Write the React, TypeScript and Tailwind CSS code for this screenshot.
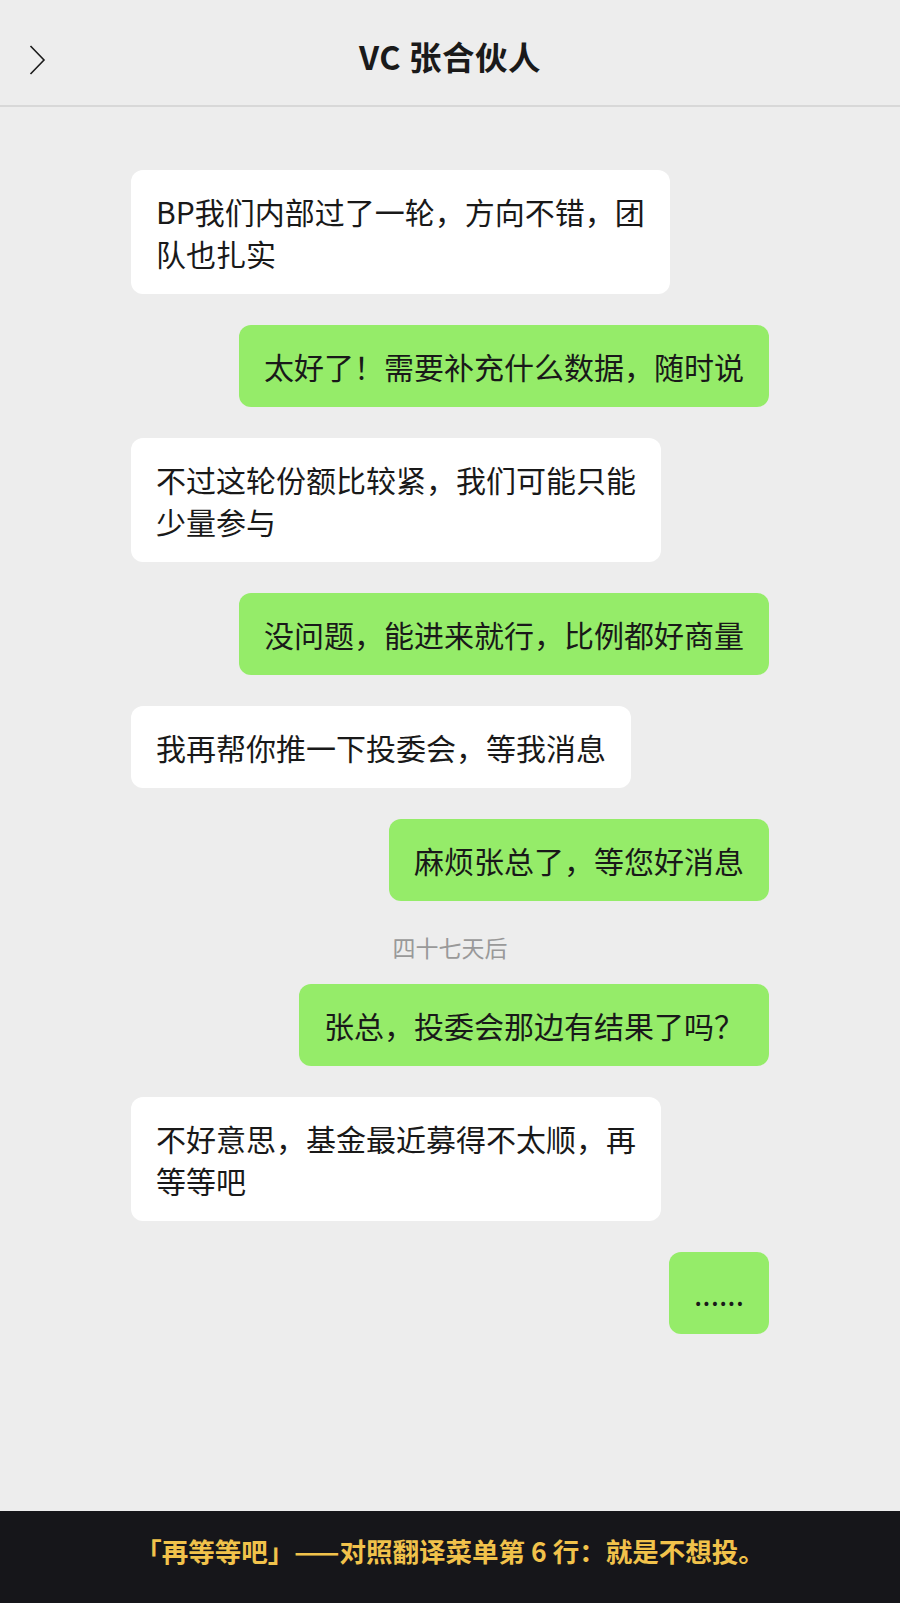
const FONT = {
  fontFamily: '"Noto Sans CJK SC", "Noto Sans", "Liberation Sans", sans-serif',
};

type Msg =
  | { kind: "in" | "out"; lines: string[] }
  | { kind: "time"; text: string };

// line breaks follow the picture, so each bubble hugs its own text
const MESSAGES: Msg[] = [
  { kind: "in", lines: ["BP我们内部过了一轮，方向不错，团", "队也扎实"] },
  { kind: "out", lines: ["太好了！需要补充什么数据，随时说"] },
  { kind: "in", lines: ["不过这轮份额比较紧，我们可能只能", "少量参与"] },
  { kind: "out", lines: ["没问题，能进来就行，比例都好商量"] },
  { kind: "in", lines: ["我再帮你推一下投委会，等我消息"] },
  { kind: "out", lines: ["麻烦张总了，等您好消息"] },
  { kind: "time", text: "四十七天后" },
  { kind: "out", lines: ["张总，投委会那边有结果了吗？"] },
  { kind: "in", lines: ["不好意思，基金最近募得不太顺，再", "等等吧"] },
  { kind: "out", lines: ["......"] },
];

function Bubble({ kind, lines }: { kind: "in" | "out"; lines: string[] }) {
  const out = kind === "out";
  return (
    <div className={out ? "flex justify-end" : "flex justify-start"}>
      <div
        className={
          "whitespace-nowrap rounded-[12px] px-[25px] py-5 text-[30px] leading-[42px] text-[#191919] " +
          (out ? "bg-[#95ec69]" : "bg-white")
        }
      >
        {lines.map((l, i) => (
          <div key={i}>{l}</div>
        ))}
      </div>
    </div>
  );
}

export default function App() {
  return (
    <div
      className="flex h-[1603px] w-[900px] flex-col bg-[#ededed]"
      style={FONT}
    >
      <header className="relative flex h-[107px] shrink-0 items-center justify-center border-b-2 border-[#d8d8d8] pt-[7px]">
        <svg
          className="absolute left-[29px] top-[45px]"
          width="17"
          height="30"
          viewBox="0 0 17 30"
          fill="none"
        >
          <polyline
            points="1.5,1 15,15 1.5,29"
            stroke="#1a1a1a"
            strokeWidth="1.6"
          />
        </svg>
        <h1 className="text-[32.5px] font-bold tracking-[0.5px] text-[#1a1a1a]">
          VC 张合伙人
        </h1>
      </header>

      <main className="flex flex-1 flex-col gap-[31px] px-[131px] pt-[63px]">
        {MESSAGES.map((m, i) =>
          m.kind === "time" ? (
            <div
              key={i}
              className="-mb-[6px] mt-[3px] text-center text-[23px] leading-[24px] text-[#999999]"
            >
              {m.text}
            </div>
          ) : (
            <Bubble key={i} kind={m.kind} lines={m.lines} />
          )
        )}
      </main>

      <footer className="flex h-[92px] shrink-0 items-center justify-center bg-[#16161a] pb-[12px]">
        <p className="text-[26.5px] font-bold text-[#f1c24b]">
          「再等等吧」——对照翻译菜单第 6 行：就是不想投。
        </p>
      </footer>
    </div>
  );
}
